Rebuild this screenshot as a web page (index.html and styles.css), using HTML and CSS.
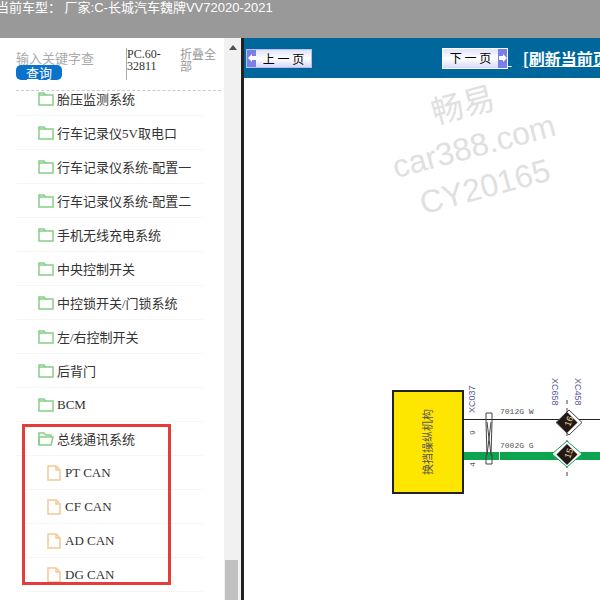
FILE: index.html
```html
<!DOCTYPE html>
<html lang="zh-CN">
<head>
    <meta charset="UTF-8">
    <title>当前车型</title>
    <link rel="stylesheet" href="styles.css">
</head>
<body>
    <div class="topbar">当前车型： 厂家:C-长城汽车魏牌VV72020-2021</div>

    <div class="main">
        <div class="sidebar">
            <div class="tools">
                <div class="search">
                    <div class="search-input">输入关键字查</div>
                    <div class="search-btn">查询</div>
                </div>
                <div class="code">PC.60-<br>32811</div>
                <div class="collapse">折叠全部</div>
            </div>

            <div class="tree">
                <div class="row"><svg class="folder" viewBox="0 0 16 14"><path d="M1 13V1h5l1.5 2H15v10z"/><path d="M1 3h6.5"/></svg>胎压监测系统</div>
                <div class="row"><svg class="folder" viewBox="0 0 16 14"><path d="M1 13V1h5l1.5 2H15v10z"/><path d="M1 3h6.5"/></svg>行车记录仪5V取电口</div>
                <div class="row"><svg class="folder" viewBox="0 0 16 14"><path d="M1 13V1h5l1.5 2H15v10z"/><path d="M1 3h6.5"/></svg>行车记录仪系统-配置一</div>
                <div class="row"><svg class="folder" viewBox="0 0 16 14"><path d="M1 13V1h5l1.5 2H15v10z"/><path d="M1 3h6.5"/></svg>行车记录仪系统-配置二</div>
                <div class="row"><svg class="folder" viewBox="0 0 16 14"><path d="M1 13V1h5l1.5 2H15v10z"/><path d="M1 3h6.5"/></svg>手机无线充电系统</div>
                <div class="row"><svg class="folder" viewBox="0 0 16 14"><path d="M1 13V1h5l1.5 2H15v10z"/><path d="M1 3h6.5"/></svg>中央控制开关</div>
                <div class="row"><svg class="folder" viewBox="0 0 16 14"><path d="M1 13V1h5l1.5 2H15v10z"/><path d="M1 3h6.5"/></svg>中控锁开关/门锁系统</div>
                <div class="row"><svg class="folder" viewBox="0 0 16 14"><path d="M1 13V1h5l1.5 2H15v10z"/><path d="M1 3h6.5"/></svg>左/右控制开关</div>
                <div class="row"><svg class="folder" viewBox="0 0 16 14"><path d="M1 13V1h5l1.5 2H15v10z"/><path d="M1 3h6.5"/></svg>后背门</div>
                <div class="row"><svg class="folder" viewBox="0 0 16 14"><path d="M1 13V1h5l1.5 2H15v10z"/><path d="M1 3h6.5"/></svg>BCM</div>
                <div class="row"><svg class="folder" viewBox="0 0 16 14"><path d="M1 13V1h5l1.5 2H13v2"/><path d="M1 13V5h14l-2 8z"/></svg>总线通讯系统</div>
                <div class="row sub"><svg class="file" viewBox="0 0 14 16"><path d="M1 1h8l4 4v10H1z"/><path d="M9 1v4h4"/></svg>PT CAN</div>
                <div class="row sub"><svg class="file" viewBox="0 0 14 16"><path d="M1 1h8l4 4v10H1z"/><path d="M9 1v4h4"/></svg>CF CAN</div>
                <div class="row sub"><svg class="file" viewBox="0 0 14 16"><path d="M1 1h8l4 4v10H1z"/><path d="M9 1v4h4"/></svg>AD CAN</div>
                <div class="row sub"><svg class="file" viewBox="0 0 14 16"><path d="M1 1h8l4 4v10H1z"/><path d="M9 1v4h4"/></svg>DG CAN</div>
            </div>

            <div class="highlight"></div>
        </div>

        <div class="scrollbar">
            <div class="scroll-up"></div>
            <div class="scroll-thumb"></div>
        </div>

        <div class="viewer">
            <div class="pager">
                <div class="page-btn prev">
                    <span class="arrow"><svg viewBox="0 0 8 8" width="8" height="8"><path d="M0 4l4-4v2h4v4H4v2z"/></svg></span>
                    <span class="page-label">上 一 页</span>
                </div>
                <div class="page-btn next">
                    <span class="page-label">下 一 页</span>
                    <span class="arrow"><svg viewBox="0 0 8 8" width="8" height="8"><path d="M8 4L4 0v2H0v4h4v2z"/></svg></span>
                </div>
                <a class="refresh">&nbsp;</a>
                <a class="refresh gap">[刷新当前页]</a>
            </div>

            <div class="sheet">
                <div class="watermark">畅易<br>car388.com<br>CY20165</div>

                <svg class="diagram" viewBox="0 0 220 130" width="220" height="130">
                    <line class="wire-black" x1="83" y1="49.5" x2="220" y2="49.5"/>
                    <rect class="wire-green" x="83" y="82" width="137" height="8"/>
                    <rect class="wire-break" x="119" y="82" width="1" height="8"/>

                    <rect class="module" x="13" y="21" width="70" height="102"/>
                    <text class="module-label" transform="translate(52 72) rotate(-90)" text-anchor="middle">换挡操纵机构</text>

                    <path class="twist" d="M106 43h6v9l-1 33h1v9h-6v-9h1l-1-33z"/>
                    <path class="twist" d="M107 52l4 33M111 52l-4 33"/>

                    <text class="pin-name" transform="translate(95 43) rotate(-90)">XC037</text>
                    <text class="pin-no" transform="translate(95 65) rotate(-90)">9</text>
                    <text class="pin-no" transform="translate(95 97) rotate(-90)">4</text>
                    <text class="wire-no" x="120" y="44">7012G W</text>
                    <text class="wire-no" x="120" y="78">7002G G</text>
                    <text class="pin-name" transform="translate(172 8) rotate(90)">XC658</text>
                    <text class="pin-name" transform="translate(195 8) rotate(90)">XC458</text>

                    <line class="dash" x1="187" y1="30" x2="187" y2="108"/>
                    <path class="diamond-out" d="M189 40l13 12.500-13 12.500-13-12.500z"/>
                    <path class="diamond" d="M187 42l10.500 10.500-10.500 10.500-10.500-10.500z"/>
                    <path class="diamond-out green" d="M187 71l15 13-15 13-15-13z"/>
                    <path class="diamond" d="M187 74l10.500 10.500-10.500 10.500-10.500-10.500z"/>
                    <text class="badge" transform="translate(190 57) rotate(-70)">16</text>
                    <text class="badge" transform="translate(190 89) rotate(-70)">15</text>
                </svg>
            </div>
        </div>
    </div>
</body>
</html>
```

FILE: styles.css
```css
html, body {
    margin: 0;
    height: 600px;
    overflow: hidden;
    background-color: #fff;
    font-family: "Liberation Serif", "Noto Sans CJK SC", serif;
}

.topbar {
    height: 38px;
    background-color: #999;
    color: #fff;
    font-family: "Liberation Sans", "Noto Sans CJK SC", sans-serif;
    font-size: 13px;
    line-height: 16px;
    margin-left: -4px;
    white-space: nowrap;
}

.main {
    display: flex;
    height: 562px;
}

/* left tree */
.sidebar {
    width: 224px;
    flex-shrink: 0;
    position: relative;
    overflow: hidden;
}

.tools {
    display: flex;
    height: 53px;
    margin-left: 16px;
    border-bottom: 1px dashed #ccc;
    box-sizing: border-box;
    width: 205px;
    padding-top: 10px;
}

.search {
    width: 110px;
    flex-shrink: 0;
    padding-top: 3px;
}

.search-input {
    color: #aaa;
    font-family: "Noto Sans CJK SC", sans-serif;
    font-size: 13px;
    line-height: 14px;
}

.search-btn {
    width: 46px;
    height: 15px;
    background-color: #0b72cc;
    border-radius: 5px;
    color: #fff;
    font-family: "Noto Sans CJK SC", sans-serif;
    font-size: 13px;
    line-height: 15px;
    text-align: center;
}

.code {
    width: 53px;
    height: 32px;
    flex-shrink: 0;
    border-left: 1px solid #aaa;
    color: #333;
    font-size: 12px;
    line-height: 12px;
}

.collapse {
    width: 38px;
    color: #999;
    font-family: "Noto Sans CJK SC", sans-serif;
    font-size: 12px;
    line-height: 12px;
}

.tree {
    margin-top: -9px;
    margin-left: 16px;
    width: 187px;
}

.row {
    display: flex;
    align-items: center;
    height: 33px;
    border-bottom: 1px solid #f5f5f5;
    padding-left: 22px;
    color: #333;
    font-size: 13px;
    white-space: nowrap;
}

.row.sub {
    padding-left: 21px;
    margin-left: 10px;
}

.folder {
    width: 16px;
    height: 14px;
    margin-right: 3px;
    flex-shrink: 0;
    fill: none;
    stroke: #86cf86;
    stroke-width: 1.5;
}

.file {
    width: 14px;
    height: 16px;
    margin-right: 4px;
    flex-shrink: 0;
    fill: none;
    stroke: #f5c795;
    stroke-width: 1.5;
}

.highlight {
    position: absolute;
    left: 22px;
    top: 386px;
    width: 143px;
    height: 155px;
    border: 3px solid #e63b3b;
}

/* scrollbar */
.scrollbar {
    width: 17px;
    flex-shrink: 0;
    background-color: #f1f1f1;
    position: relative;
}

.scroll-up {
    width: 0;
    height: 0;
    margin: 7px auto 0;
    border-left: 4px solid transparent;
    border-right: 4px solid transparent;
    border-bottom: 5px solid #505050;
}

.scroll-thumb {
    position: absolute;
    left: 1px;
    right: 3px;
    top: 522px;
    height: 40px;
    background-color: #c1c1c1;
}

/* right page */
.viewer {
    flex: 1;
    min-width: 0;
    border-left: 3px solid #222;
    overflow: hidden;
}

.pager {
    display: flex;
    align-items: center;
    height: 40px;
    background-color: #00679c;
    white-space: nowrap;
}

.page-btn {
    display: flex;
    align-items: stretch;
    flex-shrink: 0;
    box-sizing: border-box;
    width: 66px;
    height: 19px;
    background: linear-gradient(#e0e3fb, #fff 50%, #d6d9f6);
    border: 1px solid #b9bef2;
    color: #000;
    font-family: "Noto Sans CJK SC", sans-serif;
    font-size: 12px;
    line-height: 17px;
}

.page-btn.prev {
    margin-left: 2px;
}

.page-btn.next {
    height: 21px;
    margin-left: 130px;
    border-color: #fff;
    line-height: 18px;
}

.arrow {
    display: flex;
    align-items: center;
    justify-content: center;
    width: 9px;
    background-color: #7a7fe8;
    flex-shrink: 0;
    fill: #fff;
}

.page-label {
    flex: 1;
    text-align: center;
}

.refresh {
    flex-shrink: 0;
    color: #fff;
    font-family: "Noto Sans CJK SC", sans-serif;
    font-size: 16px;
    font-weight: bold;
    text-decoration: underline;
    white-space: pre;
}

.refresh.gap {
    margin-left: 11px;
}

.sheet {
    position: relative;
    height: 522px;
}

.watermark {
    position: absolute;
    left: 140px;
    top: 5px;
    width: 180px;
    color: #e0e0e0;
    font-family: "Liberation Sans", "Noto Sans CJK SC", sans-serif;
    font-size: 32px;
    line-height: 42px;
    text-align: center;
    transform: rotate(-15deg);
}

/* wiring diagram */
.diagram {
    position: absolute;
    left: 136px;
    top: 292px;
}

.module {
    fill: #ffe600;
    stroke: #222;
    stroke-width: 2;
}

.module-label {
    fill: #555;
    font-family: "Noto Sans CJK SC", sans-serif;
    font-size: 11px;
}

.wire-black {
    stroke: #222;
}

.wire-green {
    fill: #0ca44f;
}

.wire-break {
    fill: #fff;
}

.twist {
    fill: none;
    stroke: #444;
}

.pin-name {
    fill: #5a5a99;
    font-family: "Liberation Sans", sans-serif;
    font-size: 9px;
}

.pin-no, .wire-no {
    fill: #555;
    font-family: "Liberation Mono", monospace;
    font-size: 8px;
}

.dash {
    stroke: #444;
    stroke-dasharray: 4 4;
}

.diamond-out {
    fill: #fff;
    stroke: #444;
}

.diamond-out.green {
    stroke: #0ca44f;
}

.diamond {
    fill: #231815;
}

.badge {
    fill: #e8d9a0;
    font-family: "Liberation Sans", sans-serif;
    font-size: 9px;
}
```
